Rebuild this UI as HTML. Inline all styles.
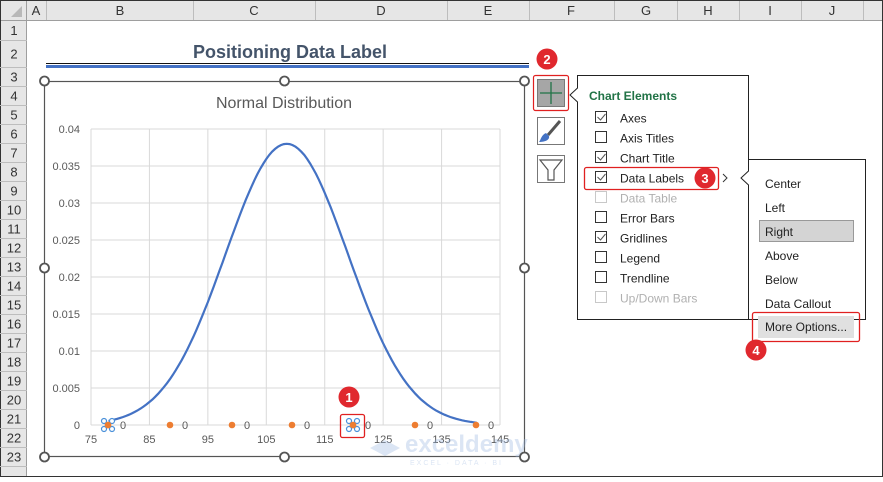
<!DOCTYPE html>
<html><head><meta charset="utf-8"><style>
html,body{margin:0;padding:0;background:#fff;}
body{width:883px;height:477px;overflow:hidden;position:relative;font-family:"Liberation Sans",sans-serif;}
svg text{font-family:"Liberation Sans",sans-serif;}
</style></head><body>
<svg width="883" height="477" viewBox="0 0 883 477" xmlns="http://www.w3.org/2000/svg" id="s">
<rect x="0" y="0" width="883" height="477" fill="#fff"/>
<!-- headers -->
<rect x="0" y="0" width="883" height="20" fill="#e6e6e6"/>
<rect x="0" y="0" width="27" height="477" fill="#e6e6e6"/>
<line x1="0" y1="20.5" x2="883" y2="20.5" stroke="#9e9e9e"/>
<line x1="26.5" y1="0" x2="26.5" y2="477" stroke="#9e9e9e"/>
<polygon points="22,6 22,17 11,17" fill="#b8b8b8"/>
<g stroke="#bdbdbd">
<line x1="46.5" y1="0" x2="46.5" y2="20"/><line x1="193.5" y1="0" x2="193.5" y2="20"/><line x1="315.5" y1="0" x2="315.5" y2="20"/><line x1="447.5" y1="0" x2="447.5" y2="20"/><line x1="529.5" y1="0" x2="529.5" y2="20"/><line x1="614.5" y1="0" x2="614.5" y2="20"/><line x1="677.5" y1="0" x2="677.5" y2="20"/><line x1="739.5" y1="0" x2="739.5" y2="20"/><line x1="801.5" y1="0" x2="801.5" y2="20"/><line x1="863.5" y1="0" x2="863.5" y2="20"/>
</g>
<g font-size="13" fill="#333" text-anchor="middle">
<text x="36" y="15">A</text><text x="120" y="15">B</text><text x="254" y="15">C</text><text x="381" y="15">D</text><text x="488" y="15">E</text><text x="571" y="15">F</text><text x="646" y="15">G</text><text x="708" y="15">H</text><text x="770" y="15">I</text><text x="832" y="15">J</text>
</g>
<g id="rows" font-size="13" fill="#333" text-anchor="middle"></g>
<!-- title -->
<text x="290" y="58" font-size="18" font-weight="bold" fill="#44546a" text-anchor="middle">Positioning Data Label</text>
<line x1="46" y1="63.5" x2="529" y2="63.5" stroke="#111" stroke-width="1"/>
<rect x="46" y="65" width="483" height="3" fill="#4472c4"/>
<!-- chart -->
<rect x="44.5" y="81.5" width="480" height="375" fill="#fff" stroke="#555" stroke-width="1.2"/>
<text x="284" y="108" font-size="16" fill="#595959" text-anchor="middle">Normal Distribution</text>
<g id="grid" stroke="#d9d9d9" stroke-width="1"></g>
<g id="ylab" font-size="11" fill="#595959" text-anchor="end"></g>
<g id="xlab" font-size="11" fill="#595959" text-anchor="middle"></g>
<path id="curve" fill="none" stroke="#4472c4" stroke-width="2.2"/>
<g id="pts"></g>
<!-- watermark -->
<g opacity="0.35">
<polygon points="370,448 385,440 400,448 385,456" fill="#9bb7e0"/>
<text x="405" y="452" font-size="24" font-weight="bold" fill="#9bb7e0">exceldemy</text>
<text x="410" y="465" font-size="7" fill="#9bb7e0" letter-spacing="2">EXCEL · DATA · BI</text>
</g>
<!-- selection box 1 -->
<rect x="340.5" y="414.5" width="24" height="23" rx="2" fill="none" stroke="#e02020" stroke-width="1.3"/>
<!-- handles -->
<g fill="#fff" stroke="#555" stroke-width="1.8">
<circle cx="44.5" cy="81" r="4.5"/><circle cx="284.5" cy="81" r="4.5"/><circle cx="524.5" cy="81" r="4.5"/>
<circle cx="44.5" cy="268" r="4.5"/><circle cx="524.5" cy="268" r="4.5"/>
<circle cx="44.5" cy="457" r="4.5"/><circle cx="284.5" cy="457" r="4.5"/><circle cx="524.5" cy="457" r="4.5"/>
</g>
<!-- buttons -->
<rect x="533.5" y="75.5" width="35" height="35" rx="2" fill="#fff" stroke="#e02020" stroke-width="1.2"/>
<rect x="537.5" y="79.5" width="27" height="27" fill="#a6a6a6" stroke="#7a7a7a"/>
<line x1="551" y1="82" x2="551" y2="104" stroke="#217346" stroke-width="1.3"/>
<line x1="540" y1="93" x2="562" y2="93" stroke="#217346" stroke-width="1.3"/>
<rect x="537.5" y="117.5" width="27" height="27" fill="#fff" stroke="#777"/>
<path d="M560,121 L548,135" stroke="#555" stroke-width="3" fill="none"/>
<path d="M546,133 C541,135 541,140 539,142 C545,142 550,140 549,136 Z" fill="#4472c4"/>
<rect x="537.5" y="155.5" width="27" height="27" fill="#fff" stroke="#777"/>
<path d="M540,160 L562,160 L554,170 L554,180 L548,180 L548,170 Z" fill="#fff" stroke="#555" stroke-width="1.2"/>
<!-- menu -->
<path d="M577.5,75.5 H748.5 V319.5 H577.5 V102 L570,95 L577.5,88 Z" fill="#fff" stroke="#222" stroke-width="1"/>
<text x="589" y="100" font-size="12" font-weight="bold" fill="#217346">Chart Elements</text>
<g id="items" font-size="12"></g>
<rect x="584.5" y="167.5" width="134" height="22" rx="2" fill="none" stroke="#e02020" stroke-width="1.3"/>
<path d="M723,174 L727,178 L723,182" fill="none" stroke="#333" stroke-width="1"/>
<!-- submenu -->
<path d="M748.5,159.5 H865.5 V319.5 H748.5 V185 L741,178 L748.5,171 Z" fill="#fff" stroke="#222" stroke-width="1"/>
<g font-size="12" fill="#222">
<text x="765" y="188">Center</text>
<text x="765" y="212">Left</text>
<rect x="759.5" y="220.5" width="94" height="21" fill="#d4d4d4" stroke="#999"/>
<text x="765" y="236">Right</text>
<text x="765" y="260">Above</text>
<text x="765" y="284">Below</text>
<text x="765" y="308">Data Callout</text>
<rect x="758" y="316" width="96" height="22" fill="#e0e0e0"/>
<text x="765" y="331">More Options...</text>
</g>
<rect x="752.5" y="312.5" width="107" height="29" rx="2" fill="none" stroke="#e02020" stroke-width="1.3"/>
<!-- badges -->
<g font-size="13" font-weight="bold" fill="#fff" text-anchor="middle">
<circle cx="349" cy="397" r="10.5" fill="#e0282e"/><text x="349" y="402">1</text>
<circle cx="547" cy="59" r="10.5" fill="#e0282e"/><text x="547" y="64">2</text>
<circle cx="705" cy="178" r="10.5" fill="#e0282e"/><text x="705" y="183">3</text>
<circle cx="756" cy="350" r="10.5" fill="#e0282e"/><text x="756" y="355">4</text>
</g>
<rect x="0.5" y="0.5" width="882" height="476" fill="none" stroke="#333"/>
</svg>
<script>
var NS="http://www.w3.org/2000/svg";
function el(p,t,a,txt){var e=document.createElementNS(NS,t);for(var k in a)e.setAttribute(k,a[k]);if(txt!=null)e.textContent=txt;document.getElementById(p).appendChild(e);return e;}
// rows
var rows=[[1,20,40],[2,40,67]];
for(var i=3;i<=24;i++){rows.push([i,67+(i-3)*19,67+(i-2)*19]);}
rows.forEach(function(r){
 el("s","line",{x1:0,x2:27,y1:r[2]+.5,y2:r[2]+.5,stroke:"#bdbdbd"});
 if(r[0]<24) el("rows","text",{x:14,y:(r[1]+r[2])/2+5},r[0]);
});
document.getElementById("s").appendChild(document.getElementById("rows"));
function X(v){return 91+(v-75)*5.843;}
function Y(v){return 425-v*7400;}
for(var v=85;v<=145;v+=10)el("grid","line",{x1:X(v),x2:X(v),y1:Y(0.04),y2:425});
el("grid","line",{x1:91,x2:91,y1:Y(0.04),y2:425});
for(var j=0;j<=8;j++){var yv=j*0.005;el("grid","line",{x1:91,x2:500,y1:Y(yv),y2:Y(yv)});
 el("ylab","text",{x:80,y:Y(yv)+4},j==0?"0":(+yv.toFixed(3)).toString());}
for(var v=75;v<=145;v+=10)el("xlab","text",{x:X(v),y:443},v);
var d="";for(var v=78;v<=141.3;v+=0.5){var g=0.038*Math.exp(-Math.pow(v-108.5,2)/(2*10.5*10.5));d+=(d?"L":"M")+X(v).toFixed(1)+","+Y(g).toFixed(1);}
document.getElementById("curve").setAttribute("d",d);
[108,170,232,292,353,415,476].forEach(function(x,i){
 el("pts","circle",{cx:x,cy:425,r:3.3,fill:"#ed7d31"});
 el("pts","text",{x:x+12,y:429,"font-size":11,fill:"#595959"},"0");
 if(i==0||i==4){[[-4,-4],[4,-4],[-4,4],[4,4]].forEach(function(o){el("pts","circle",{cx:x+o[0],cy:425+o[1],r:2.5,fill:"#fff",stroke:"#4a90d9","stroke-width":1.2});});
  el("pts","circle",{cx:x,cy:425,r:3.3,fill:"#ed7d31"});}
});
var items=[["Axes",1,0],["Axis Titles",0,0],["Chart Title",1,0],["Data Labels",1,0],["Data Table",0,1],["Error Bars",0,0],["Gridlines",1,0],["Legend",0,0],["Trendline",0,0],["Up/Down Bars",0,1]];
items.forEach(function(it,i){var y=118+i*20;var c=it[2]?"#c8c8c8":"#333";
 el("items","rect",{x:595.5,y:y-6.5,width:11,height:11,fill:"#fff",stroke:c});
 if(it[1])el("items","path",{d:"M597.5,"+(y-1)+" l3,3 l5,-6",fill:"none",stroke:"#555","stroke-width":1});
 el("items","text",{x:620,y:y+4.5,fill:it[2]?"#b0b0b0":"#222"},it[0]);});
</script>
</body></html>
